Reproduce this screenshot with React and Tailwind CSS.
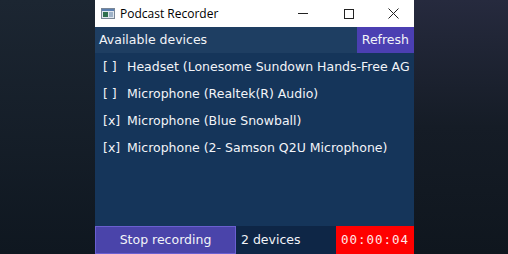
import React from "react";

const devices = [
  { on: false, name: "Headset (Lonesome Sundown Hands-Free AG" },
  { on: false, name: "Microphone (Realtek(R) Audio)" },
  { on: true, name: "Microphone (Blue Snowball)" },
  { on: true, name: "Microphone (2- Samson Q2U Microphone)" },
];

function AppIcon() {
  return (
    <svg width="14" height="11" viewBox="0 0 14 11">
      <rect x="0.5" y="0.5" width="13" height="10" fill="#dfe6ee" stroke="#7a8796" />
      <rect x="1" y="1" width="12" height="2" fill="#5b7fb0" />
      <rect x="2" y="4" width="5" height="5" fill="#2f6f4f" />
      <rect x="8" y="4" width="4" height="5" fill="#9fb3c8" />
    </svg>
  );
}

export default function App() {
  return (
    <div className="flex h-[254px] w-[508px] overflow-hidden bg-gradient-to-r from-[#131b24] via-[#1a232d] to-[#10161e]">
      <div className="w-[95px] shrink-0 bg-gradient-to-b from-[#1c2632] to-[#0f1720]" />

      {/* window */}
      <div className="flex w-[319px] shrink-0 flex-col bg-[#15355a]">
        {/* title bar */}
        <div className="flex h-[27px] items-center bg-white pl-[6px] font-['Open_Sans',sans-serif] text-[12px] text-black">
          <AppIcon />
          <span className="ml-[5px]">Podcast Recorder</span>
          <div className="ml-auto flex h-full items-center">
            <div className="flex w-[46px] items-center justify-center">
              <div className="h-px w-[10px] bg-[#222]" />
            </div>
            <div className="flex w-[46px] items-center justify-center">
              <div className="h-[10px] w-[10px] border border-[#222]" />
            </div>
            <div className="flex w-[42px] items-center justify-center">
              <svg width="11" height="11" viewBox="0 0 11 11">
                <path d="M0.5 0.5 L10.5 10.5 M10.5 0.5 L0.5 10.5" stroke="#222" strokeWidth="1" />
              </svg>
            </div>
          </div>
        </div>

        <div className="flex flex-1 flex-col font-['DejaVu_Sans',sans-serif] text-[12.5px] text-[#f2f4f8]">
          {/* header */}
          <div className="flex h-[26px] items-center bg-[#1e3e62] pl-[4px]">
            <span>Available devices</span>
            <div className="ml-auto flex h-full items-center bg-[#4b3fb2] px-[5px]">Refresh</div>
          </div>

          {/* list */}
          <div className="flex flex-1 flex-col pt-[1px]">
            {devices.map((d) => (
              <div key={d.name} className="flex h-[27px] items-center whitespace-nowrap">
                <span className="w-[32px] pl-[8px]">{d.on ? "[x]" : "[ ]"}</span>
                <span>{d.name}</span>
              </div>
            ))}
          </div>

          {/* footer */}
          <div className="flex h-[28px] bg-[#0e2646]">
            <div className="flex w-[141px] items-center justify-center border border-[#6a5fd0] bg-[#4a44aa]">
              Stop recording
            </div>
            <div className="flex flex-1 items-center pl-[5px]">2 devices</div>
            <div className="flex w-[78px] items-center justify-center bg-[#ff0000] font-['DejaVu_Sans_Mono',monospace] tracking-[1px] text-[#ffe8ea]">
              00:00:04
            </div>
          </div>
        </div>
      </div>

      <div className="flex-1 bg-gradient-to-b from-[#262a3e] via-[#151c26] to-[#0f161e]" />
    </div>
  );
}
